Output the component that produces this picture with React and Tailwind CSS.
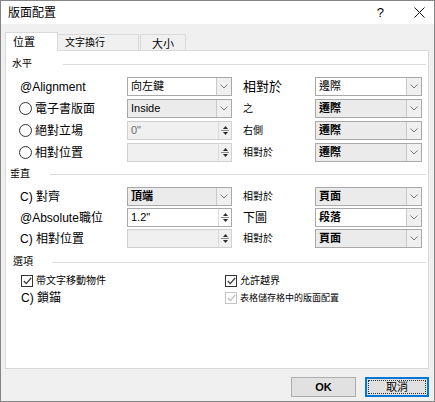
const font = "font-['Liberation_Sans','Noto_Sans_CJK_TC',sans-serif]";

function Chevron() {
  return (
    <svg width="8" height="5" viewBox="0 0 8 5">
      <path d="M0.5 0.5 L4 4 L7.5 0.5" fill="none" stroke="#7a7a7a" strokeWidth="1" />
    </svg>
  );
}

function Combo({ value, white, bold, width }) {
  return (
    <div className={`flex h-[19px] ${width} border border-[#a9a9a9] ${white ? 'bg-white' : 'bg-[#ebebeb]'}`}>
      <div className={`flex-1 flex items-center pl-[3px] text-[11px] leading-none text-black ${bold ? 'font-semibold' : ''}`}>
        {value}
      </div>
      <div className="w-[15px] flex items-center justify-center border-l border-[#c9c9c9] bg-[#f0f0f0]">
        <Chevron />
      </div>
    </div>
  );
}

function Spin({ value, white, width }) {
  return (
    <div className={`flex h-[19px] ${width} border ${white ? 'border-[#a9a9a9] bg-white' : 'border-[#d0d0d0] bg-[#f0f0f0]'}`}>
      <div className={`flex-1 flex items-center pl-[3px] text-[11px] leading-none ${white ? 'text-black' : 'text-[#6d6d6d]'}`}>
        {value}
      </div>
      <div className="w-[13px] flex flex-col border-l border-[#dadada]">
        <div className="flex-1 flex items-end justify-center pb-[1px]">
          <svg width="5" height="3" viewBox="0 0 5 3"><path d="M0 3 L2.5 0 L5 3Z" fill="#2b2b2b" /></svg>
        </div>
        <div className="h-px bg-[#8e8e8e] mx-[2px]" />
        <div className="flex-1 flex items-start justify-center pt-[1px]">
          <svg width="5" height="3" viewBox="0 0 5 3"><path d="M0 0 L2.5 3 L5 0Z" fill="#2b2b2b" /></svg>
        </div>
      </div>
    </div>
  );
}

function Radio({ label }) {
  return (
    <div className="flex items-center">
      <span className="w-[13px] h-[13px] rounded-full border border-[#333333] bg-white" />
      <span className="ml-[3px] text-[12px] leading-none">{label}</span>
    </div>
  );
}

function Check({ label, checked, disabled, size }) {
  return (
    <div className="flex items-center">
      <span className={`w-[12px] h-[12px] flex items-center justify-center border bg-white ${disabled ? 'border-[#c4c4c4]' : 'border-[#333333]'}`}>
        {checked && (
          <svg width="9" height="8" viewBox="0 0 9 8">
            <path d="M0.8 4 L3.3 6.6 L8.2 0.8" fill="none" stroke={disabled ? '#bdbdbd' : '#333333'} strokeWidth="1.3" />
          </svg>
        )}
      </span>
      <span className={`ml-[3px] leading-none ${size}`}>{label}</span>
    </div>
  );
}

function Section({ title, pad, width }) {
  return (
    <div className={`flex items-center h-[14px] ${pad}`}>
      <span className={`${width} text-[10px] leading-none`}>{title}</span>
      <div className="flex-1 h-px bg-[#dcdcdc] mr-[2px]" />
    </div>
  );
}

function Row({ left, mid, label, labelSize, right }) {
  return (
    <div className="flex items-center h-[19px] pl-[13px]">
      <div className="w-[108px] flex items-center">{left}</div>
      {mid}
      <div className={`ml-[11px] w-[72px] leading-none ${labelSize}`}>{label}</div>
      {right}
    </div>
  );
}

export default function App() {
  return (
    <div className={`w-[435px] h-[402px] flex flex-col border border-[#858585] bg-[#f0f0f0] text-black ${font}`}>
      {/* Title bar */}
      <div className="h-[23px] flex items-center bg-white pl-[7px]">
        <span className="flex-1 text-[12px] leading-none">版面配置</span>
        <span className="text-[13px] leading-none mr-[30px]">?</span>
        <svg width="11" height="11" viewBox="0 0 11 11" className="mr-[9px]">
          <path d="M0.5 0.5 L10.5 10.5 M10.5 0.5 L0.5 10.5" stroke="#111" strokeWidth="1" />
        </svg>
      </div>

      {/* Tabs */}
      <div className="flex items-end pt-[8px] pl-[4px] -mb-px relative z-10">
        <div className="w-[53px] h-[19px] bg-white border border-b-0 border-[#d9d9d9] pl-[7px] pt-[4px] text-[11px] leading-none">
          位置
        </div>
        <div className="w-[81px] h-[17px] border border-b-0 border-l-0 border-[#d9d9d9] pl-[7px] pt-[3px] text-[10px] leading-none">
          文字換行
        </div>
        <div className="w-[46px] h-[17px] ml-px border border-b-0 border-[#d9d9d9] flex justify-center pt-[4px] text-[11px] leading-none">
          大小
        </div>
      </div>

      {/* Page */}
      <div className="ml-[4px] w-[424px] h-[319px] border border-[#d9d9d9] bg-white flex flex-col">
        <div className="mt-[6px]">
          <Section title="水平" pad="pl-[6px]" width="w-[51px]" />
        </div>
        <div className="mt-[6px] flex flex-col gap-[3px]">
          <Row
            left={<span className="ml-px text-[12px] leading-none">@Alignment</span>}
            mid={<Combo value="向左鍵" white width="w-[105px]" />}
            label="相對於"
            labelSize="text-[13px]"
            right={<Combo value="邊際" white width="w-[107px]" />}
          />
          <Row
            left={<Radio label="電子書版面" />}
            mid={<Combo value="Inside" width="w-[105px]" />}
            label="之"
            labelSize="text-[10px]"
            right={<Combo value="遷際" bold width="w-[107px]" />}
          />
          <Row
            left={<Radio label="絕對立場" />}
            mid={<Spin value={'0"'} width="w-[105px]" />}
            label="右側"
            labelSize="text-[10px]"
            right={<Combo value="遷際" bold width="w-[107px]" />}
          />
          <Row
            left={<Radio label="相對位置" />}
            mid={<Spin value="" width="w-[105px]" />}
            label="相對於"
            labelSize="text-[10px]"
            right={<Combo value="遷際" bold width="w-[107px]" />}
          />
        </div>

        <div className="mt-[5px]">
          <Section title="垂直" pad="pl-[4px]" width="w-[40px]" />
        </div>
        <div className="mt-[6px] flex flex-col gap-[2px]">
          <Row
            left={<span className="ml-px text-[12px] leading-none">C) 對齊</span>}
            mid={<Combo value="頂端" bold width="w-[105px]" />}
            label="相對於"
            labelSize="text-[10px]"
            right={<Combo value="頁面" bold width="w-[107px]" />}
          />
          <Row
            left={<span className="ml-px text-[12px] leading-none">@Absolute職位</span>}
            mid={<Spin value={'1.2"'} white width="w-[105px]" />}
            label="下圖"
            labelSize="text-[12px]"
            right={<Combo value="段落" bold white width="w-[107px]" />}
          />
          <Row
            left={<span className="ml-px text-[12px] leading-none">C) 相對位置</span>}
            mid={<Spin value="" width="w-[105px]" />}
            label="相對於"
            labelSize="text-[10px]"
            right={<Combo value="頁面" bold width="w-[107px]" />}
          />
        </div>

        <div className="mt-[7px]">
          <Section title="選項" pad="pl-[7px]" width="w-[39px]" />
        </div>
        <div className="mt-[5px] flex flex-col gap-[3px] pl-[15px]">
          <div className="flex items-center h-[14px]">
            <div className="w-[204px]">
              <Check label="帶文字移動物件" checked size="text-[10px]" />
            </div>
            <Check label="允許越界" checked size="text-[10px]" />
          </div>
          <div className="flex items-center h-[14px]">
            <div className="w-[204px] text-[12px] leading-none">C) 鎖錨</div>
            <Check label="表格儲存格中的版面配置" checked disabled size="text-[9px]" />
          </div>
        </div>
      </div>

      {/* Buttons */}
      <div className="flex justify-end gap-[9px] pt-[8px] pr-[5px]">
        <button className="w-[65px] h-[20px] border border-[#adadad] bg-[#e1e1e1] text-[11px] font-bold leading-none">
          OK
        </button>
        <button className="w-[64px] h-[20px] border-2 border-[#0078d7] bg-[#e1e1e1] p-px">
          <div className="w-full h-full border border-dotted border-[#333] flex items-center justify-center text-[11px] leading-none">
            取消
          </div>
        </button>
      </div>
    </div>
  );
}
